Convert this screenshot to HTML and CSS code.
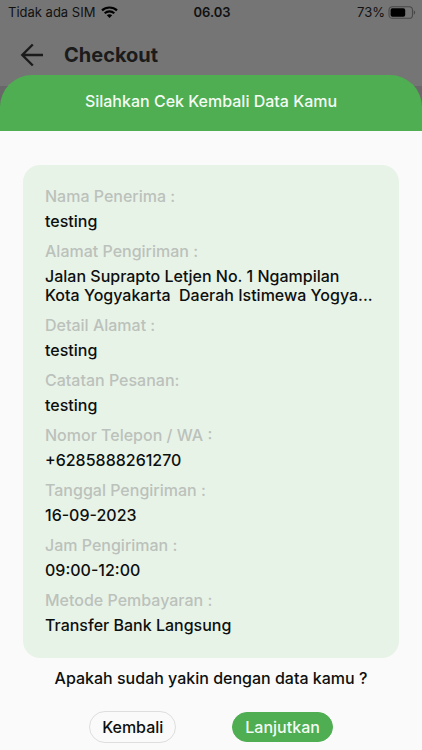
FILE: index.html
```html
<!DOCTYPE html>
<html lang="id">
<head>
    <meta charset="UTF-8">
    <meta name="viewport" content="width=device-width, initial-scale=1.0">
    <title>Checkout</title>
    <link rel="stylesheet" href="styles.css">
</head>
<body>
    <div class="status-bar">
        <div class="carrier">
            <span>Tidak ada SIM</span>
            <svg width="17" height="12" viewBox="0 0 17 12" fill="none" stroke="#000">
                <path d="M1 4.4C5.1.5 11.9.5 16 4.4" stroke-width="2.2"/>
                <path d="M3.7 7.2c2.7-2.5 6.9-2.5 9.6 0" stroke-width="2.1"/>
                <path d="M8.5 12 5.8 9.3c1.5-1.4 3.9-1.4 5.4 0z" fill="#000" stroke="none"/>
            </svg>
        </div>
        <span class="time">06.03</span>
        <div class="battery">
            <span>73%</span>
            <svg width="28" height="13" viewBox="0 0 28 13">
                <rect x="1" y=".7" width="23.5" height="11.6" rx="3.4" fill="none" stroke="#484848" stroke-width="1.1"/>
                <rect x="2.6" y="2.3" width="14.6" height="8.4" rx="1.8"/>
                <path d="M25.8 4.3v4.4c1.9-.8 1.9-3.6 0-4.4z" fill="#484848"/>
            </svg>
        </div>
    </div>

    <header class="app-bar">
        <button class="back" type="button" aria-label="Kembali ke halaman sebelumnya">
            <svg width="24" height="24" viewBox="0 0 24 24" fill="none" stroke="#1b1b1b" stroke-width="2.4">
                <path d="M23 12H3M12.800 1.500 2.300 12l10.500 10.500"/>
            </svg>
        </button>
        <h1>Checkout</h1>
    </header>

    <main class="page">
        <section class="sheet">
            <h2>Silahkan Cek Kembali Data Kamu</h2>

            <dl class="card">
                <div class="field">
                    <dt>Nama Penerima :</dt>
                    <dd>testing</dd>
                </div>
                <div class="field">
                    <dt>Alamat Pengiriman :</dt>
                    <dd>Jalan Suprapto Letjen No. 1 Ngampilan<br>Kota Yogyakarta&nbsp; Daerah Istimewa Yogya...</dd>
                </div>
                <div class="field">
                    <dt>Detail Alamat :</dt>
                    <dd>testing</dd>
                </div>
                <div class="field">
                    <dt>Catatan Pesanan:</dt>
                    <dd>testing</dd>
                </div>
                <div class="field">
                    <dt>Nomor Telepon / WA :</dt>
                    <dd>+6285888261270</dd>
                </div>
                <div class="field">
                    <dt>Tanggal Pengiriman :</dt>
                    <dd>16-09-2023</dd>
                </div>
                <div class="field">
                    <dt>Jam Pengiriman :</dt>
                    <dd>09:00-12:00</dd>
                </div>
                <div class="field">
                    <dt>Metode Pembayaran :</dt>
                    <dd>Transfer Bank Langsung</dd>
                </div>
            </dl>

            <p class="question">Apakah sudah yakin dengan data kamu ?</p>

            <div class="actions">
                <button class="btn btn-outline" type="button">Kembali</button>
                <button class="btn btn-primary" type="button">Lanjutkan</button>
            </div>
        </section>
    </main>
</body>
</html>
```
FILE: styles.css
```css
* {
    box-sizing: border-box;
}

body {
    display: flex;
    flex-direction: column;
    min-height: 100vh;
    margin: 0;
    font-family: Inter, "Liberation Sans", sans-serif;
    font-size: 16px;
    font-weight: 500;
    line-height: 19px;
    color: #0d0f0d;
    background-color: #757575;
}

h1, h2, p, dl, dd {
    margin: 0;
}

button {
    font: inherit;
    cursor: pointer;
}

svg {
    display: block;
}

/* status bar */
.status-bar {
    display: grid;
    grid-template-columns: 1fr auto 1fr;
    align-items: center;
    height: 24px;
    padding: 0 6px 0 8px;
    font-size: 13px;
    font-weight: 400;
    color: #111;
}

.carrier, .battery {
    display: flex;
    align-items: center;
    gap: 6px;
}

.battery {
    justify-content: flex-end;
    gap: 3px;
}

.time {
    font-weight: 600;
}

/* app bar */
.app-bar {
    display: flex;
    align-items: center;
    gap: 20px;
    height: 62px;
    padding: 0 20px;
}

.back {
    padding: 0;
    border: none;
    background: none;
}

.app-bar h1 {
    font-size: 20px;
    line-height: 24px;
    font-weight: 700;
    color: #1b1b1b;
}

/* bottom sheet */
.page {
    display: flex;
    flex: 1;
    flex-direction: column;
    background-color: #696769;
}

.sheet {
    flex: 1;
    margin-top: -11px;
    border-radius: 40px 40px 0 0;
    background-color: #fafafa;
}

.sheet h2 {
    padding: 17px 16px 20px;
    border-radius: 32px 32px 0 0;
    font-size: 16px;
    font-weight: 500;
    text-align: center;
    color: #f4fbf4;
    background-color: #4eae51;
}

.card {
    display: flex;
    flex-direction: column;
    gap: 11px;
    margin: 34px 23px 11px;
    padding: 22px 22px 23px;
    border-radius: 17px;
    background-color: #e8f3e8;
}

.field {
    display: flex;
    flex-direction: column;
    gap: 6px;
    white-space: nowrap;
}

.field dt {
    color: #bbc1bb;
}

.question {
    text-align: center;
}

.actions {
    display: flex;
    justify-content: center;
    align-items: center;
    gap: 56px;
    margin-top: 23px;
}

.btn {
    height: 32px;
    padding: 0 12px;
    border: 1px solid #dedede;
    border-radius: 16px;
}

.btn-outline {
    color: #0d0f0d;
    background-color: #fafafa;
}

.btn-primary {
    height: 30px;
    border-color: #4eae51;
    color: #f4fbf4;
    background-color: #4eae51;
}
```
